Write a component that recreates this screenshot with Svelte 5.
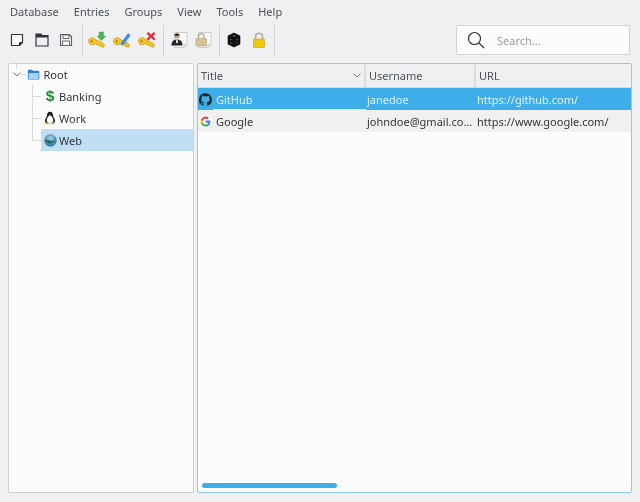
<script lang="ts">
	const menus = ['Database', 'Entries', 'Groups', 'View', 'Tools', 'Help'];

	const entries = [
		{ icon: 'github', title: 'GitHub', username: 'janedoe', url: 'https://github.com/', selected: true },
		{ icon: 'google', title: 'Google', username: 'johndoe@gmail.co...', url: 'https://www.google.com/', selected: false }
	];
</script>

{#snippet key(mark)}
	<svg class="tool-icon" viewBox="0 0 18 18">
		<path d="M.6 10.500C.4 7.800 3 6 5.600 7l1.700 1.300 7.700 4 1.500 1.600-.9 2.300-2.300-.3-.7-1.100-1.300.1-.6-1.100-1.400.1-2-1.300C4.500 14.800 1 14 .6 10.500z" fill="#f6c322" stroke="#bb8a18" stroke-width="0.600" />
		<circle cx="3.600" cy="10.300" r="1" fill="#9a7212" />
		{#if mark === 'add'}
			<path d="M9 5h2.200V1h4.200v4H17.800L13.300 9.500z" fill="#4cb453" stroke="#2f8f3a" stroke-width="0.400" />
		{:else if mark === 'edit'}
			<path d="M8.500 11.500L15 2.500l2.300 1.700-6.500 9-2.800 1z" fill="#3f8fe2" stroke="#2a6fb8" stroke-width="0.400" />
		{:else}
			<path d="M8.500 2.500L10.300 1l2.700 2.500L15.700 1l1.800 1.500-2.700 2.700 2.700 2.800-1.800 1.500-2.700-2.700-2.700 2.700-1.800-1.500 2.700-2.800z" fill="#e0323c" />
		{/if}
	</svg>
{/snippet}

<div class="window">
	<nav class="menubar">
		{#each menus as menu (menu)}
			<span>{menu}</span>
		{/each}
	</nav>

	<div class="toolbar">
		<div class="tool-group first">
			<svg class="tool-icon small" viewBox="0 0 16 16">
				<path d="M2.500 2.500h11v8l-3 3h-8z" fill="#fcfcfc" stroke="#31363b" stroke-width="1.200" stroke-linejoin="round" />
				<path d="M10.500 13.500v-3h3" fill="#31363b" stroke="#31363b" />
			</svg>
			<svg class="tool-icon small" viewBox="0 0 16 16">
				<path d="M2 2h5l1 1.500h6V14H2z" fill="none" stroke="#31363b" stroke-width="1.200" />
				<path d="M2 2h5l1 1.500h6v2H2z" fill="#31363b" />
			</svg>
			<svg class="tool-icon small" viewBox="0 0 16 16">
				<path d="M2.500 2.500h9l2 2v9h-11z" fill="#eff0f1" stroke="#5a5f64" stroke-width="1.100" />
				<path d="M5 3h6v3.500H5zM4.500 9h7v4.500h-7z" fill="#fcfcfc" stroke="#5a5f64" stroke-width="0.900" />
			</svg>
		</div>
		<div class="tool-group keys">
			{@render key('add')}
			{@render key('edit')}
			{@render key('delete')}
		</div>
		<div class="tool-group docs">
			<svg class="tool-icon" viewBox="0 0 18 18">
				<path d="M4.500 1.500h12.500v12l-3 3H4.500z" fill="#f8f8f6" stroke="#cdcdc8" />
				<path d="M14 16.500v-3h3" fill="#e2e2de" stroke="#cdcdc8" />
				<circle cx="7" cy="5" r="2.500" fill="#c79a7c" />
				<path d="M4.400 4.400c.4-2.500 4.800-2.500 5.200 0-1.700.4-3.500.4-5.200 0z" fill="#2b2320" />
				<path d="M1.500 14.500c0-4 2-6 5.500-6s5.500 2 5.500 6z" fill="#23262a" />
				<path d="M6.200 8.500h1.600l.2 3.500H6z" fill="#e8e8e8" />
			</svg>
			<svg class="tool-icon" viewBox="0 0 18 18">
				<path d="M4.500 1.500h12.500v12l-3 3H4.500z" fill="#f8f8f6" stroke="#cdcdc8" />
				<path d="M14 16.500v-3h3" fill="#e2e2de" stroke="#cdcdc8" />
				<path d="M4.500 8V5.500c0-3.600 5.500-3.600 5.500 0V8" fill="none" stroke="#b9b2a2" stroke-width="1.500" />
				<rect x="2" y="7.500" width="10.500" height="7.500" rx="0.800" fill="#d8c49a" stroke="#ae9a72" stroke-width="0.600" />
			</svg>
		</div>
		<div class="tool-group misc">
			<svg class="tool-icon small" viewBox="0 0 16 16">
				<path d="M8 1.500l5.500 2.600v7.800L8 14.500l-5.500-2.600V4.100z" fill="#111" stroke="#111" stroke-width="1.600" stroke-linejoin="round" />
				<circle cx="8" cy="4" r="0.900" fill="#777" />
				<circle cx="4.800" cy="7.500" r="0.800" fill="#666" />
				<circle cx="11.200" cy="7.500" r="0.800" fill="#666" />
				<circle cx="4.800" cy="11" r="0.800" fill="#555" />
				<circle cx="11.200" cy="11" r="0.800" fill="#555" />
			</svg>
			<svg class="tool-icon small" viewBox="0 0 16 16">
				<path d="M4.500 8V4.500c0-4.300 7-4.300 7 0V8" fill="none" stroke="#b5b5ab" stroke-width="1.800" />
				<rect x="2.500" y="7" width="11" height="8.500" rx="0.800" fill="#f0c80e" stroke="#c49a0a" stroke-width="0.600" />
			</svg>
		</div>
		<label class="search">
			<svg viewBox="0 0 18 18" width="18" height="18">
				<circle cx="7.500" cy="7.500" r="6" fill="none" stroke="#31363b" stroke-width="1.200" />
				<path d="M12 12l5 5" stroke="#31363b" stroke-width="1.200" />
			</svg>
			<span>Search...</span>
		</label>
	</div>

	<div class="panes">
		<aside class="tree">
			<div class="tree-root">
				<svg class="chevron" viewBox="0 0 8 5" width="8" height="5">
					<path d="M.5.5L4 4 7.500.5" fill="none" stroke="#7a7e82" />
				</svg>
				<svg viewBox="0 0 16 16" width="13" height="13">
					<path d="M1 3.500c0-1 .6-1.500 1.500-1.500h3.500l1.500 1.500H14c.8 0 1.200.5 1.200 1.300v7.700c0 .9-.5 1.500-1.400 1.500H2.500c-1 0-1.500-.6-1.500-1.500z" fill="#2f7fd6" />
					<path d="M2 6.200h12.200v6.600c0 .4-.2.700-.6.700H2.700c-.4 0-.7-.3-.7-.7z" fill="#a9d3f5" />
				</svg>
				<span>Root</span>
			</div>
			<ul class="groups">
				<li>
					<span class="icon-cell dollar">$</span>
					<span>Banking</span>
				</li>
				<li>
					<span class="icon-cell">
						<svg viewBox="0 0 16 16" width="14" height="14">
							<path d="M8 .8c-2.300 0-3.300 1.800-3.300 4 0 1.800-2.400 3.800-2.400 6.200 0 1.400.7 2.500 1.700 3h8c1-.5 1.700-1.600 1.700-3 0-2.400-2.400-4.400-2.400-6.200 0-2.200-1-4-3.300-4z" fill="#111" />
							<path d="M8 5c-1.800 0-3.800 3.200-3.800 6 0 1.600 1.600 2.700 3.800 2.700s3.800-1.100 3.800-2.700C11.800 8.200 9.800 5 8 5z" fill="#fff" />
							<path d="M6.500 4.200L8 5.800l1.500-1.600z" fill="#e8a317" />
							<path d="M2 15.200l2-2.800 2 2.800zM14 15.200l-2-2.800-2 2.800z" fill="#e8a317" />
						</svg>
					</span>
					<span>Work</span>
				</li>
				<li class="current">
					<span class="icon-cell">
						<svg viewBox="0 0 16 16" width="13" height="13">
							<defs>
								<radialGradient id="globe" cx="0.5" cy="0.3" r="0.75">
									<stop offset="0" stop-color="#9fd4ea" />
									<stop offset="1" stop-color="#1f6f9e" />
								</radialGradient>
							</defs>
							<circle cx="8" cy="8" r="7.200" fill="url(#globe)" stroke="#4a6f84" stroke-width="0.800" />
							<path d="M2 8c2-1 4-.5 6 .3s4 .6 6-.5c-.3 2-2.500 3.200-4.500 3-1.300 1-2.300 1.800-3.300 1.200S5 10.500 3.500 10.300 2 9 2 8z" fill="#1b6c54" />
						</svg>
					</span>
					<span>Web</span>
				</li>
			</ul>
		</aside>

		<section class="table">
			<div class="row head">
				<div class="col-title head-title">
					<span>Title</span>
					<svg viewBox="0 0 8 5" width="8" height="5">
						<path d="M.5.5L4 4 7.500.5" fill="none" stroke="#7a7e82" />
					</svg>
				</div>
				<div class="col-user">Username</div>
				<div class="col-url">URL</div>
			</div>
			{#each entries as entry (entry.title)}
				<div class="row entry" class:selected={entry.selected}>
					<div class="col-title">
						{#if entry.icon === 'github'}
							<svg class="entry-icon" viewBox="0 0 16 16">
								<path fill="#232629" d="M8 .2a8 8 0 0 0-2.500 15.600c.4.100.5-.2.500-.4v-1.400c-2.200.5-2.700-1-2.700-1-.4-.9-.9-1.200-.9-1.200-.7-.5.100-.5.100-.5.800.100 1.200.8 1.200.8.700 1.200 1.900.9 2.300.7.100-.5.300-.9.500-1.100-1.800-.2-3.600-.9-3.600-4 0-.9.300-1.600.8-2.100-.1-.2-.4-1 .1-2.100 0 0 .7-.2 2.200.8a7.600 7.600 0 0 1 4 0c1.500-1 2.200-.8 2.200-.8.400 1.100.2 1.900.1 2.100.5.600.8 1.300.8 2.100 0 3.100-1.900 3.700-3.700 3.900.3.300.6.800.6 1.500v2.200c0 .2.100.5.600.4A8 8 0 0 0 8 .2z" />
							</svg>
						{:else}
							<svg class="entry-icon" viewBox="0 0 16 16">
								<circle cx="8" cy="8" r="8" fill="#fff" />
								<path fill="#4285f4" d="M14 8.200c0-.5 0-.9-.1-1.400H8v2.600h3.400a2.900 2.900 0 0 1-1.300 1.900v1.600h2c1.200-1.100 1.900-2.700 1.900-4.700z" />
								<path fill="#34a853" d="M8 14.300c1.700 0 3.100-.6 4.100-1.500l-2-1.600c-.6.400-1.300.7-2.100.7-1.600 0-3-1.100-3.500-2.600H2.400v1.600A6.200 6.200 0 0 0 8 14.300z" />
								<path fill="#fbbc05" d="M4.500 9.800a3.700 3.700 0 0 1 0-2.400V5.800H2.400a6.200 6.200 0 0 0 0 5.600z" />
								<path fill="#ea4335" d="M8 4.300c.9 0 1.700.3 2.400.9l1.800-1.800A6.200 6.200 0 0 0 2.400 5.800l2.100 1.600C5 5.500 6.400 4.300 8 4.300z" />
							</svg>
						{/if}
						<span class="entry-title">{entry.title}</span>
					</div>
					<div class="col-user">{entry.username}</div>
					<div class="col-url">{entry.url}</div>
				</div>
			{/each}
			<div class="spacer"></div>
			<div class="scrollbar"><div class="thumb"></div></div>
		</section>
	</div>
</div>

<style>
	:global(body) {
		margin: 0;
		background: #eff0f1;
	}

	.window {
		width: 640px;
		height: 502px;
		display: flex;
		flex-direction: column;
		box-sizing: border-box;
		background: #eff0f1;
		color: #31363b;
		font-family: 'Noto Sans', sans-serif;
		font-size: 11px;
		overflow: hidden;
		filter: blur(0.3px);
	}

	.menubar {
		height: 22px;
		display: flex;
		align-items: center;
		gap: 15px;
		padding: 0 0 0 10px;
		box-sizing: border-box;
		color: #4d5257;
	}

	.toolbar {
		height: 36px;
		display: flex;
		align-items: center;
		padding-left: 8px;
		padding-right: 10px;
	}

	.tool-group {
		height: 31px;
		display: flex;
		align-items: center;
		box-sizing: border-box;
		border-right: 1px solid #cfd1d3;
	}

	.tool-group.first {
		width: 75px;
		gap: 8.5px;
		padding-left: 1px;
	}

	.tool-group.keys {
		width: 81px;
		gap: 7px;
		padding-left: 5px;
	}

	.tool-group.docs {
		width: 56px;
		gap: 6px;
		padding-left: 6px;
	}

	.tool-group.misc {
		width: 55px;
		gap: 9px;
		padding-left: 6px;
	}

	.tool-icon {
		width: 18px;
		height: 18px;
		flex: none;
	}

	.tool-icon.small {
		width: 16px;
		height: 16px;
	}

	.search {
		margin-left: auto;
		width: 174px;
		height: 30px;
		display: flex;
		align-items: center;
		gap: 12px;
		padding-left: 10px;
		box-sizing: border-box;
		background: #fcfcfc;
		border: 1px solid #d2d4d6;
		border-radius: 2px;
		color: #9a9ea2;
	}

	.panes {
		flex: 1;
		display: flex;
		gap: 3px;
		padding: 5px 8px 9px 8px;
		min-height: 0;
	}

	.tree {
		width: 186px;
		box-sizing: border-box;
		background: #fcfcfc;
		border: 1px solid #cfd1d3;
		border-radius: 2px;
	}

	.tree-root {
		height: 21px;
		display: flex;
		align-items: center;
		padding-left: 4px;
		gap: 3.5px;
		position: relative;
	}

	.tree-root .chevron {
		margin-right: 2.5px;
	}

	/* branch stubs around the expander */
	.tree-root::before {
		content: '';
		position: absolute;
		left: 7px;
		top: 0;
		height: 5px;
		border-left: 1px solid #d8d9da;
	}

	.tree-root::after {
		content: '';
		position: absolute;
		left: 12px;
		top: 10px;
		width: 5px;
		border-top: 1px solid #d8d9da;
	}

	.groups {
		list-style: none;
		margin: 0 0 0 32px;
		padding: 0;
		position: relative;
	}

	.groups::before {
		content: '';
		position: absolute;
		left: -9px;
		top: 0;
		height: 55px;
		border-left: 1px solid #d8d9da;
	}

	.groups li {
		position: relative;
		height: 22px;
		display: flex;
		align-items: center;
		gap: 1px;
		padding-left: 1px;
	}

	.groups li::before {
		content: '';
		position: absolute;
		left: -9px;
		top: 11px;
		width: 9px;
		border-top: 1px solid #d8d9da;
	}

	.groups li.current {
		background: #c0dff5;
	}

	.icon-cell {
		width: 16px;
		display: flex;
		justify-content: center;
		align-items: center;
	}

	.dollar {
		color: #178a2c;
		font-size: 15.5px;
		font-weight: 700;
		line-height: 1;
		font-family: 'Liberation Sans', sans-serif;
	}

	.table {
		flex: 1;
		min-width: 0;
		display: flex;
		flex-direction: column;
		box-sizing: border-box;
		background: #fcfcfc;
		border: 1px solid #8fcbef;
		border-radius: 2px;
	}

	.row {
		display: flex;
		height: 22px;
		flex: none;
		align-items: center;
	}

	.row.head {
		height: 24px;
		background: #eff0f1;
		border-bottom: 1px solid #d8dadc;
		box-sizing: border-box;
		color: #4d5257;
	}

	.col-title {
		width: 168px;
		height: 100%;
		box-sizing: border-box;
		display: flex;
		align-items: center;
		padding-left: 1px;
		gap: 4px;
		flex: none;
	}

	.head-title {
		width: 166px;
		justify-content: space-between;
		padding-left: 3px;
		padding-right: 3px;
	}

	.col-user {
		width: 110px;
		box-sizing: border-box;
		padding-left: 1px;
		flex: none;
		white-space: nowrap;
	}

	.col-url {
		flex: 1;
		padding-left: 1px;
		white-space: nowrap;
	}

	.head .col-user,
	.head .col-url {
		height: 100%;
		display: flex;
		align-items: center;
		border-left: 2px solid #dcdddf;
		padding-left: 3px;
	}

	.entry {
		color: #31363b;
	}

	.entry:nth-of-type(3) {
		background: #f0f0f1;
	}

	.entry.selected {
		background: #3daee9;
		color: #def1fb;
	}

	.entry-icon {
		width: 13px;
		height: 13px;
		flex: none;
	}

	.entry-title {
		flex: 1;
		height: 100%;
		display: flex;
		align-items: center;
		box-sizing: border-box;
	}

	/* current-item underline on the focused cell */
	.selected .entry-title {
		margin-left: -3px;
		padding-left: 3px;
		box-shadow: inset 0 -1px 0 #d5edfa;
	}

	.spacer {
		flex: 1;
	}

	.scrollbar {
		height: 9px;
		flex: none;
		padding: 0 4px;
		box-sizing: border-box;
	}

	.thumb {
		width: 135px;
		height: 5px;
		border-radius: 3px;
		background: #3daee9;
	}
</style>
